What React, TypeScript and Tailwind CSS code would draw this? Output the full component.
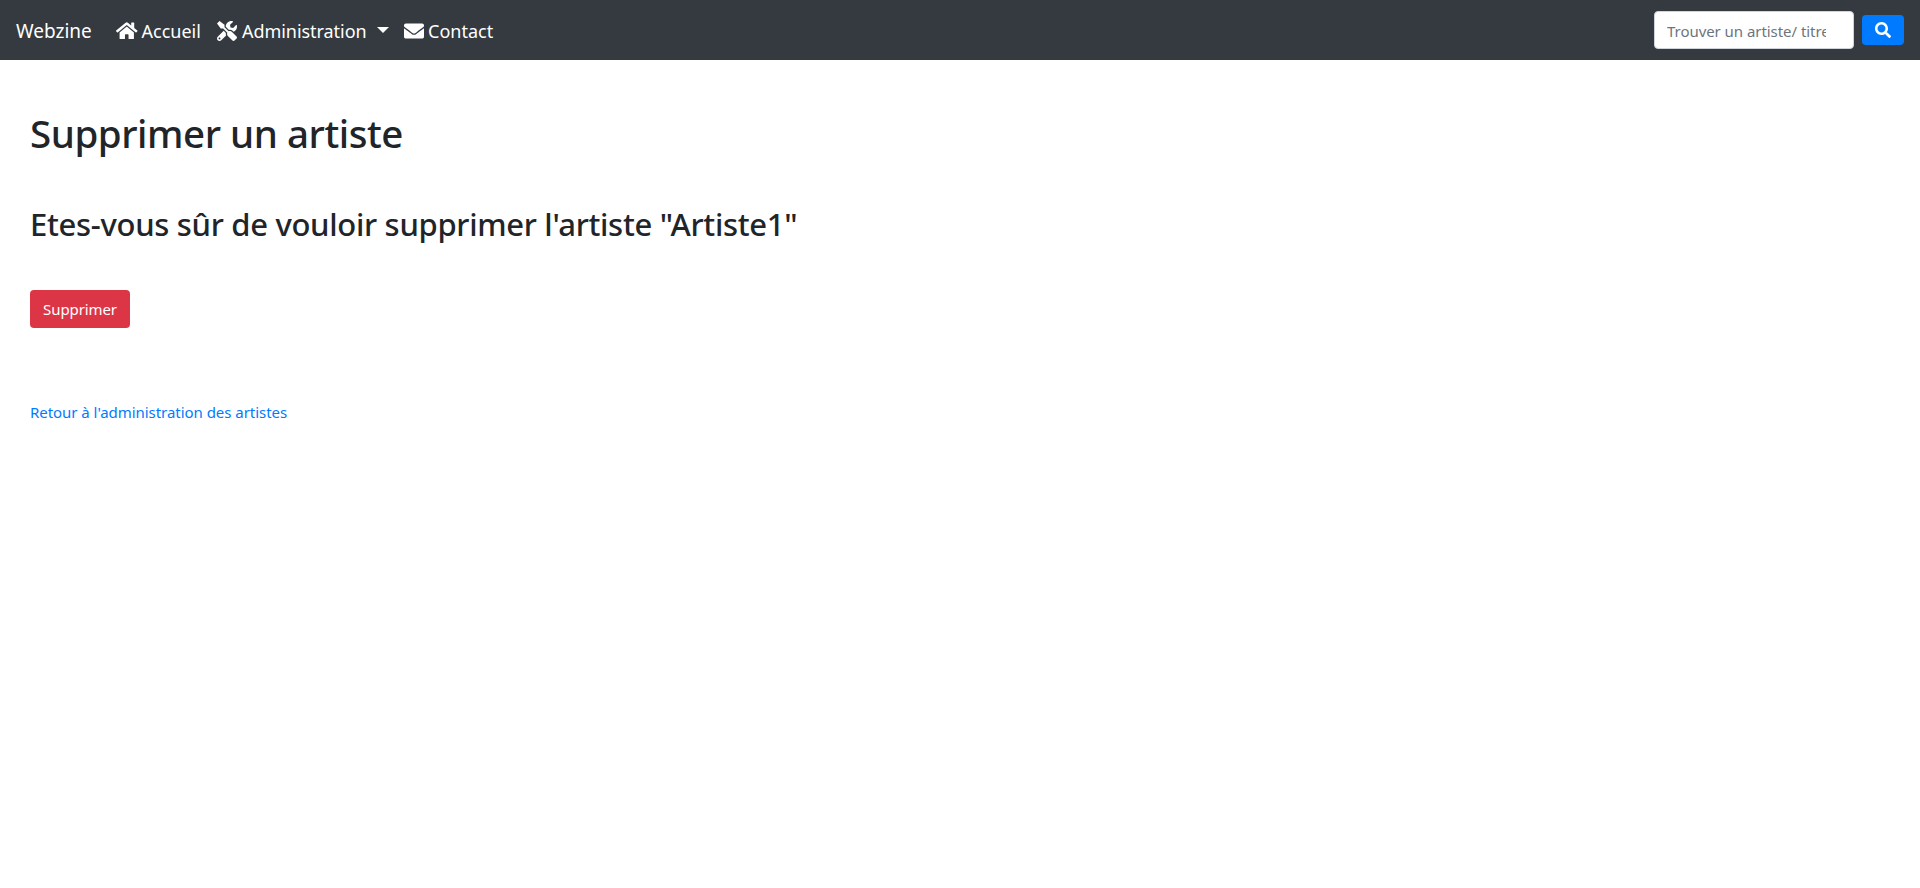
import { FaEnvelope, FaHome, FaSearch, FaTools } from "react-icons/fa";

function Navbar() {
  return (
    <nav className="flex h-[60px] items-center bg-[#343a40] px-4 text-[18px] leading-[30px] text-white">
      <a href="#" className="w-[100px] pt-0.5 text-[19px]">
        Webzine
      </a>
      <ul className="flex items-center pt-0.5">
        <li className="w-[101px]">
          <a href="#" className="flex items-center gap-1">
            <FaHome className="size-[21.5px] shrink-0" />
            Accueil
          </a>
        </li>
        <li className="w-[187px]">
          <a href="#" className="flex items-center">
            <FaTools className="size-5 shrink-0" />
            <span className="ml-[5px] w-[135px] tracking-[-0.05px]">Administration</span>
            <span className="-mt-[3px] border-x-[6px] border-t-[6px] border-x-transparent border-t-white" />
          </a>
        </li>
        <li>
          <a href="#" className="flex items-center gap-1">
            <FaEnvelope className="size-5 shrink-0" />
            Contact
          </a>
        </li>
      </ul>
      <form className="ml-auto flex items-center gap-2">
        <input
          type="text"
          placeholder="Trouver un artiste/ titre"
          className="h-[38px] w-[200px] rounded border border-[#ced4da] bg-white pt-0.5 pr-[27px] pl-3 text-[15px] tracking-[-0.05px] text-[#495057] placeholder:text-[#6c757d]"
        />
        <button type="button" className="flex h-[30px] w-[42px] items-center justify-center rounded-[4px] bg-[#007bff]">
          <FaSearch className="size-4" />
        </button>
      </form>
    </nav>
  );
}

export default function App() {
  return (
    <div className="min-h-screen bg-white font-['Noto_Sans',sans-serif] text-[#212529]">
      <Navbar />
      <main className="flex flex-col items-start px-[30px] pt-[49px]">
        <h1 className="text-[38.5px] leading-[48px] font-medium tracking-[-0.45px]">Supprimer un artiste</h1>
        <h2 className="mt-[48px] text-[31px] leading-[38px] font-medium tracking-[-0.3px]">
          Etes-vous sûr de vouloir supprimer l'artiste "Artiste1"
        </h2>
        <button type="button" className="mt-[47px] h-[38px] w-[100px] rounded bg-[#dc3545] text-[15px] tracking-[-0.1px] text-white">
          Supprimer
        </button>
        <a href="#" className="mt-[72px] text-[15px] leading-6 tracking-[-0.04px] text-[#007bff]">
          Retour à l'administration des artistes
        </a>
      </main>
    </div>
  );
}
